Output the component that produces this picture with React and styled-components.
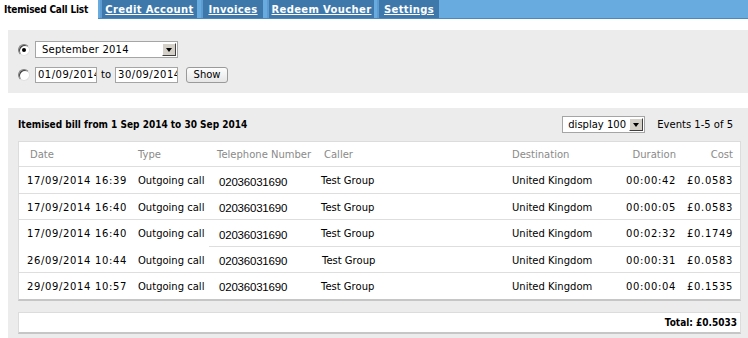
import React from "react";
import styled, { createGlobalStyle, css } from "styled-components";

const Global = createGlobalStyle`
  html, body { margin: 0; padding: 0; background: #fff; }
  body { font-family: "DejaVu Sans", Verdana, sans-serif; font-size: 10px; color: #000; }
  * { box-sizing: border-box; }
`;

const boldCondensed = css`
  font-family: "DejaVu Sans Condensed", "DejaVu Sans", sans-serif;
  font-stretch: condensed;
  font-weight: bold;
`;

const TabBar = styled.div`
  display: flex;
  align-items: stretch;
  height: 19px;
  background: #68acdf;
  border-bottom: 1px solid #4c88bb;
`;

const Tab = styled.a`
  display: flex;
  align-items: center;
  justify-content: center;
  width: ${(p) => p.$w}px;
  margin-left: ${(p) => p.$ml || 0}px;
  font-weight: bold;
  font-size: 10px;
  letter-spacing: 0.35px;
  color: #fff;
  text-decoration: underline;
  background: #3e78aa;
  border-left: 2px solid #5d9bd0;
  ${(p) =>
    p.$active &&
    css`
      ${boldCondensed};
      background: #fff;
      color: #000;
      text-decoration: none;
      border-left: none;
      justify-content: flex-start;
      padding-left: 4px;
      font-size: 10px;
      letter-spacing: -0.2px;
      margin-bottom: -1px;
    `}
`;

const Content = styled.div`
  padding-left: 8px;
  padding-top: 11px;
`;

const Panel = styled.div`
  background: #ececec;
`;

const FilterPanel = styled(Panel)`
  display: flex;
  flex-direction: column;
  gap: 8px;
  padding: 11px 0 10px 10px;
  margin-bottom: 15px;
`;

const FilterRow = styled.div`
  display: flex;
  align-items: center;
  height: 17px;
`;

const Radio = styled.span`
  width: 12px;
  height: 12px;
  border-radius: 50%;
  border: 1px solid;
  border-color: #808080 #e0e0e0 #e0e0e0 #808080;
  background: #fff;
  box-shadow: inset 1px 1px 0 #404040;
  margin-right: 5px;
  position: relative;
  ${(p) =>
    p.$checked &&
    css`
      &::after {
        content: "";
        position: absolute;
        left: 3px;
        top: 3px;
        width: 4px;
        height: 4px;
        border-radius: 50%;
        background: #000;
      }
    `}
`;

const Select = styled.div`
  width: ${(p) => p.$w}px;
  height: 17px;
  background: #fff;
  border: 1px solid #a5a5a5;
  display: flex;
  align-items: center;
  padding-left: ${(p) => p.$pl || 6}px;
  font-size: 10px;
  letter-spacing: ${(p) => p.$ls ?? 0.2}px;
`;

const SelectText = styled.span`
  flex: 1;
  white-space: nowrap;
  overflow: hidden;
`;

const ArrowBox = styled.span`
  flex: none;
  width: 14px;
  height: 13px;
  margin-right: 1px;
  background: #d4d0c8;
  border: 1px solid;
  border-color: #fff #404040 #404040 #fff;
  display: flex;
  align-items: center;
  justify-content: center;
  &::after {
    content: "";
    border-left: 3px solid transparent;
    border-right: 3px solid transparent;
    border-top: 4px solid #000;
  }
`;

const DateInput = styled.div`
  width: ${(p) => p.$w}px;
  height: 16px;
  background: #fff;
  border: 1px solid #a5a5a5;
  font-size: 10px;
  letter-spacing: 0.5px;
  padding-left: 2px;
  line-height: 14px;
  overflow: hidden;
  white-space: nowrap;
`;

const ToLabel = styled.span`
  font-size: 10px;
  margin: 0 4px;
`;

const Button = styled.div`
  margin-left: 8px;
  width: 42px;
  height: 16px;
  border: 1px solid #9a9a9a;
  border-radius: 3px;
  background: linear-gradient(#fdfdfd, #e6e6e6);
  font-size: 10px;
  display: flex;
  align-items: center;
  justify-content: center;
`;

const BillPanel = styled(Panel)`
  padding: 0 7px 8px 10px;
`;

const BillHeader = styled.div`
  display: flex;
  align-items: center;
  height: 33px;
  padding-right: 8px;
`;

const BillTitle = styled.div`
  ${boldCondensed};
  flex: 1;
  font-size: 10px;
`;

const Events = styled.div`
  font-size: 10px;
  margin-left: 12px;
`;

const Box = styled.div`
  background: #fff;
  border: 1px solid #dcdcdc;
  border-bottom: 2px solid #c6c6c6;
`;

const cols = "8px 111px 79px 104px 191px 1fr 56px 57px 7px";

const Row = styled.div`
  display: grid;
  grid-template-columns: ${cols};
  align-items: center;
  height: ${(p) => p.$h}px;
  position: relative;
  color: ${(p) => (p.$head ? "#8a8a8a" : "#000")};
  ${(p) =>
    !p.$last &&
    css`
      &::after {
        content: "";
        position: absolute;
        left: ${p.$partial ? 190 : 0}px;
        right: 0;
        bottom: 0;
        height: 1px;
        background: #dedede;
      }
    `}
`;

const Cell = styled.div`
  font-size: 10px;
  white-space: nowrap;
  text-align: ${(p) => (p.$right ? "right" : "left")};
  letter-spacing: ${(p) => (p.$num ? "0.65px" : "0")};
  padding-left: ${(p) => p.$pl || 0}px;
  ${(p) =>
    p.$phone &&
    css`
      font-family: "Liberation Sans", Arial, sans-serif;
      font-size: 11.5px;
      letter-spacing: -0.2px;
      padding-left: 2px;
      margin-top: 2px;
    `}
`;

const Spacer = styled.div``;

const TotalBox = styled(Box)`
  ${boldCondensed};
  margin-top: 11px;
  height: 22px;
  display: flex;
  align-items: center;
  justify-content: flex-end;
  padding-right: 3px;
  font-size: 10px;
`;

const rows = [
  ["17/09/2014 16:39", "00:00:42", "£0.0583", 27],
  ["17/09/2014 16:40", "00:00:05", "£0.0583", 26],
  ["17/09/2014 16:40", "00:02:32", "£0.1749", 27],
  ["26/09/2014 10:44", "00:00:31", "£0.0583", 26],
  ["29/09/2014 10:57", "00:00:04", "£0.1535", 26],
];

export default function App() {
  return (
    <>
      <Global />
      <TabBar>
        <Tab $active $w={98}>Itemised Call List</Tab>
        <Tab $w={97} $ml={2}>Credit Account</Tab>
        <Tab $w={62} $ml={4}>Invoices</Tab>
        <Tab $w={107} $ml={4}>Redeem Voucher</Tab>
        <Tab $w={62} $ml={3}>Settings</Tab>
      </TabBar>
      <Content>
        <FilterPanel>
          <FilterRow>
            <Radio $checked />
            <Select $w={143}>
              <SelectText>September 2014</SelectText>
              <ArrowBox />
            </Select>
          </FilterRow>
          <FilterRow>
            <Radio />
            <DateInput $w={62}>01/09/2014</DateInput>
            <ToLabel>to</ToLabel>
            <DateInput $w={63}>30/09/2014</DateInput>
            <Button>Show</Button>
          </FilterRow>
        </FilterPanel>
        <BillPanel>
          <BillHeader>
            <BillTitle>Itemised bill from 1 Sep 2014 to 30 Sep 2014</BillTitle>
            <Select $w={83} $pl={5} $ls={0}>
              <SelectText>display 100</SelectText>
              <ArrowBox />
            </Select>
            <Events>Events 1-5 of 5</Events>
          </BillHeader>
          <Box>
            <Row $head $h={25}>
              <Spacer />
              <Cell $pl={3}>Date</Cell>
              <Cell>Type</Cell>
              <Cell>Telephone Number</Cell>
              <Cell $pl={3}>Caller</Cell>
              <Cell>Destination</Cell>
              <Cell $right>Duration</Cell>
              <Cell $right>Cost</Cell>
              <Spacer />
            </Row>
            {rows.map((r, i) => (
              <Row key={i} $h={r[3]} $partial={i === 2} $last={i === rows.length - 1}>
                <Spacer />
                <Cell $num>{r[0]}</Cell>
                <Cell>Outgoing call</Cell>
                <Cell $phone>02036031690</Cell>
                <Cell $pl={i === 3 ? 1 : 0}>Test Group</Cell>
                <Cell>United Kingdom</Cell>
                <Cell $right $num>{r[1]}</Cell>
                <Cell $right $num>{r[2]}</Cell>
                <Spacer />
              </Row>
            ))}
          </Box>
          <TotalBox>Total: £0.5033</TotalBox>
        </BillPanel>
      </Content>
    </>
  );
}
